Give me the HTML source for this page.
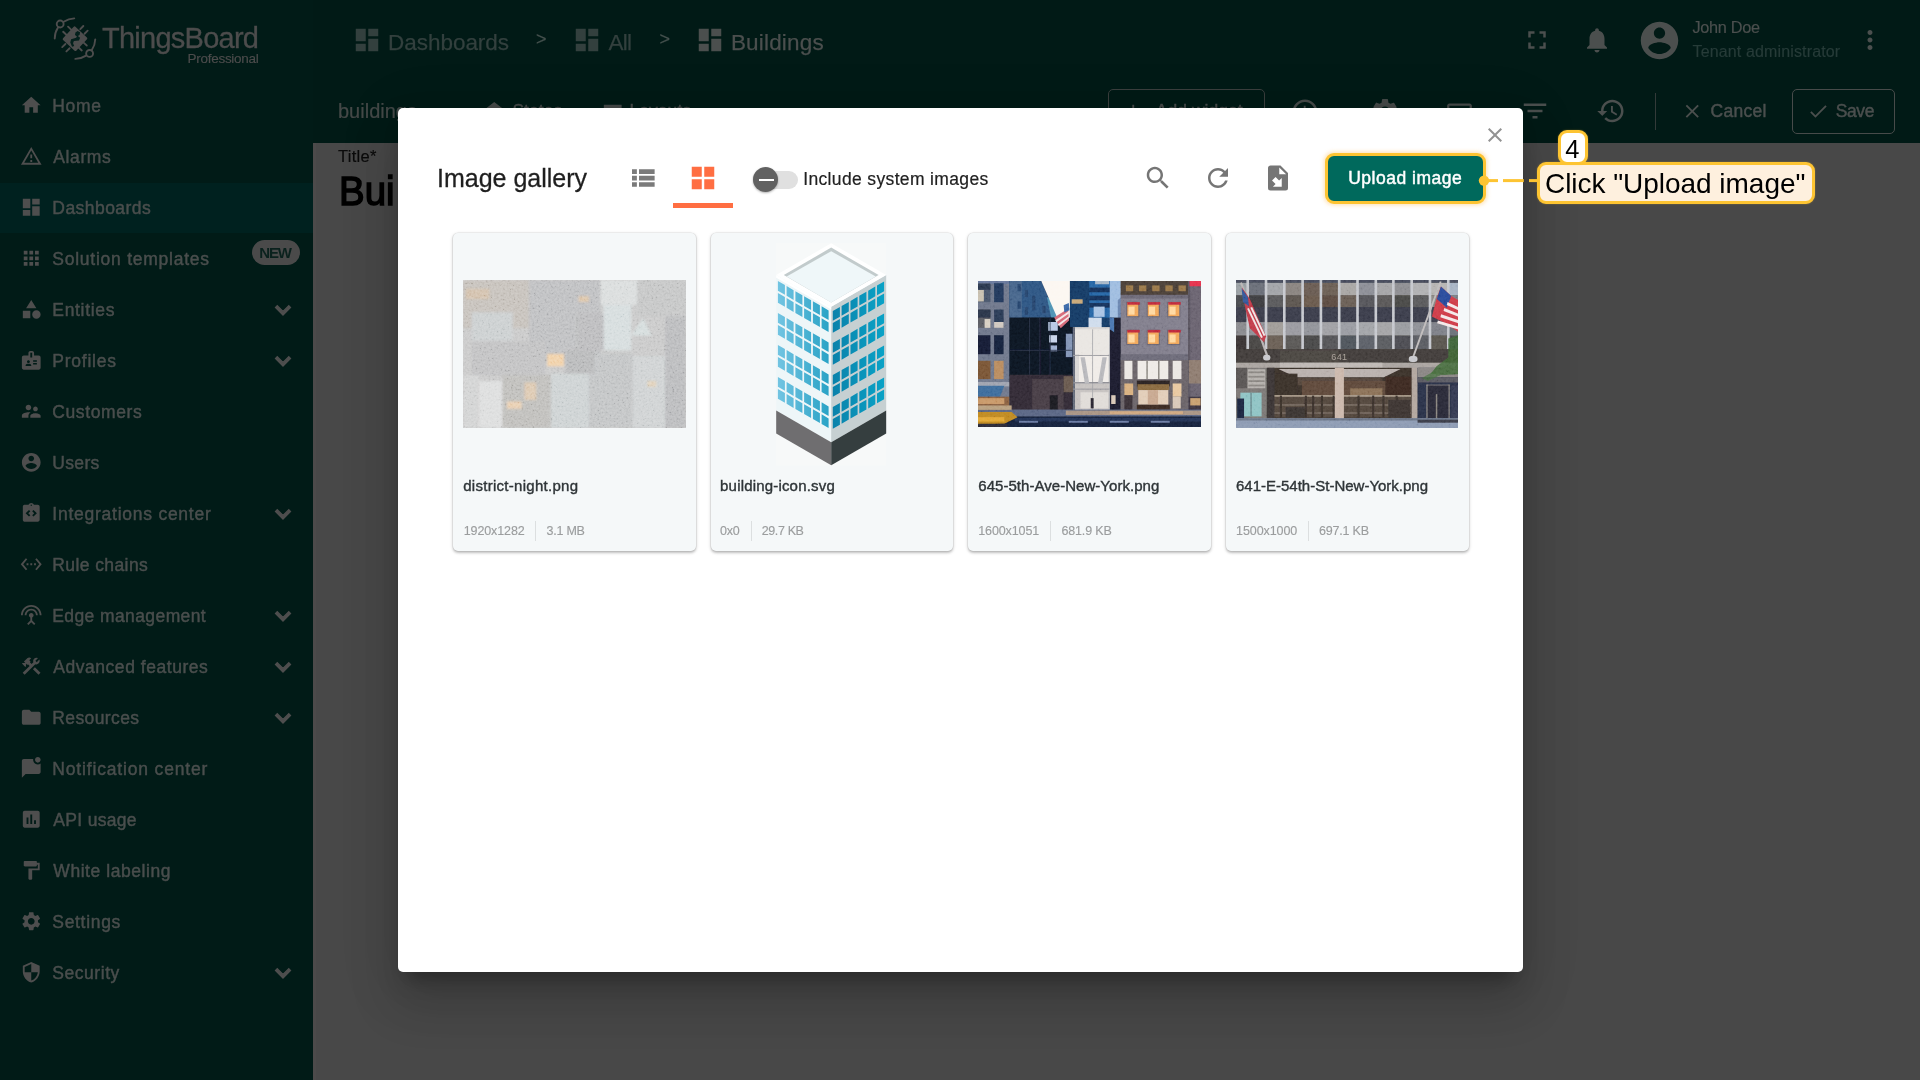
<!DOCTYPE html>
<html lang="en"><head><meta charset="utf-8"><title>ThingsBoard - Image gallery</title>
<style>
html,body{margin:0;padding:0}
body{width:1920px;height:1080px;overflow:hidden;position:relative;background:#484848;font-family:"Liberation Sans",sans-serif}
.a,.t,.i{position:absolute}
.t{line-height:1;white-space:nowrap}
.i{display:block;overflow:visible}
#side{left:0;top:0;width:313px;height:1080px;background:#011b17}
#top{left:313px;top:0;width:1607px;height:80px;background:#011a16}
#dtb{left:313px;top:80px;width:1607px;height:63px;background:#011a16}
#content{left:313px;top:143px;width:1607px;height:937px;background:#484848}
#dlg{left:398px;top:108px;width:1125px;height:864px;background:#fff;border-radius:5px;box-shadow:0 14px 19px -9px rgba(0,0,0,.34),0 30px 48px 4px rgba(0,0,0,.14),0 11px 58px 10px rgba(0,0,0,.07)}
.card{top:233px;width:242.7px;height:318px;background:#f5f8f9;border-radius:5px;box-shadow:0 0 0 .6px rgba(0,0,0,.07),0 1.5px 2.5px rgba(0,0,0,.2),0 1px 4px rgba(0,0,0,.1)}
.vd{width:1px;height:20px;top:521px;background:#dcdfe0}
</style></head><body>

<nav aria-label="Main menu"><div id="side" class="a"></div>
<div class="a" style="left:0;top:183px;width:313px;height:50px;background:#00211f"></div>
<svg class="i" style="left:45px;top:10px;width:60px;height:60px" viewBox="0 0 1080 1080"><g fill="none" stroke="#4d4d4d" stroke-width="34" stroke-linecap="round"><path d="M175 515A365 365 0 0 1 234 316"/><path d="M336 212A365 365 0 0 1 527 150"/><path d="M905 528A365 365 0 0 1 843 719"/><path d="M739 821A365 365 0 0 1 546 880"/><circle cx="273" cy="252" r="62"/><circle cx="803" cy="782" r="62"/><path d="M415 300L475 358"/><path d="M328 392L388 450"/><path d="M690 288L635 345"/><path d="M768 372L712 428"/><path d="M310 668L368 612"/><path d="M385 745L443 688"/><path d="M752 640L695 588"/><path d="M662 728L605 675"/></g><rect x="-163" y="-163" width="326" height="326" rx="22" fill="#4d4d4d" transform="translate(540 517) rotate(43)"/><path fill="#04201c" d="M585 378L632 402 622 452 590 470 632 500 612 548 520 560 505 600 525 650 488 662 455 585 470 525 560 500 575 475 540 452 548 405z"/></svg>
<span class="t" style="left:102.00px;top:24.00px;font-size:29px;color:#4c4c4c;-webkit-text-stroke:0.32px currentColor;letter-spacing:-0.750px;">ThingsBoard</span>
<span class="t" style="left:187.50px;top:52.00px;font-size:13.5px;color:#4c4c4c;-webkit-text-stroke:0.15px currentColor;letter-spacing:-0.273px;">Professional</span>
<svg class="i" style="left:19.65px;top:94.15px;width:22.50px;height:22.50px;" viewBox="0 0 24 24"><path fill="#4e4e4e" d="M10 20v-6h4v6h5v-8h3L12 3 2 12h3v8z"/></svg>
<span class="t" style="left:52.30px;top:98.00px;font-size:17.5px;color:#4a4e4d;font-weight:400;-webkit-text-stroke:0.45px currentColor;letter-spacing:0.684px;">Home</span>
<svg class="i" style="left:19.65px;top:145.15px;width:22.50px;height:22.50px;" viewBox="0 0 24 24"><path fill="#4e4e4e" d="M12 5.99L19.53 19H4.47L12 5.99M12 2L1 21h22L12 2zm1 14h-2v2h2v-2zm0-6h-2v4h2v-4z"/></svg>
<span class="t" style="left:53.30px;top:149.00px;font-size:17.5px;color:#4a4e4d;font-weight:400;-webkit-text-stroke:0.45px currentColor;letter-spacing:0.610px;">Alarms</span>
<svg class="i" style="left:19.65px;top:196.15px;width:22.50px;height:22.50px;" viewBox="0 0 24 24"><path fill="#4e4e4e" d="M3 13h8V3H3v10zm0 8h8v-6H3v6zm10 0h8V11h-8v10zm0-18v6h8V3h-8z"/></svg>
<span class="t" style="left:52.30px;top:200.00px;font-size:17.5px;color:#4a4e4d;font-weight:400;-webkit-text-stroke:0.45px currentColor;letter-spacing:0.450px;">Dashboards</span>
<svg class="i" style="left:19.65px;top:247.15px;width:22.50px;height:22.50px;" viewBox="0 0 24 24"><path fill="#4e4e4e" d="M4 8h4V4H4v4zm6 12h4v-4h-4v4zm-6 0h4v-4H4v4zm0-6h4v-4H4v4zm6 0h4v-4h-4v4zm6-10v4h4V4h-4zm-6 4h4V4h-4v4zm6 6h4v-4h-4v4zm0 6h4v-4h-4v4z"/></svg>
<span class="t" style="left:52.30px;top:251.00px;font-size:17.5px;color:#4a4e4d;font-weight:400;-webkit-text-stroke:0.45px currentColor;letter-spacing:0.753px;">Solution templates</span>
<svg class="i" style="left:19.65px;top:298.15px;width:22.50px;height:22.50px;" viewBox="0 0 24 24"><path fill="#4e4e4e" d="M12 2l-5.5 9h11L12 2zm5.5 11c-2.49 0-4.5 2.01-4.5 4.5s2.01 4.5 4.5 4.5 4.5-2.01 4.5-4.5-2.01-4.5-4.5-4.5zM3 21.5h8v-8H3v8z"/></svg>
<span class="t" style="left:52.30px;top:302.00px;font-size:17.5px;color:#4a4e4d;font-weight:400;-webkit-text-stroke:0.45px currentColor;letter-spacing:0.685px;">Entities</span>
<svg class="i" style="left:267.75px;top:295.40px;width:30.00px;height:30.00px;stroke:#4e4e4e;stroke-width:1px" viewBox="0 0 24 24"><path fill="#4e4e4e" d="M16.59 8.59L12 13.17 7.41 8.59 6 10l6 6 6-6z"/></svg>
<svg class="i" style="left:19.65px;top:349.15px;width:22.50px;height:22.50px;" viewBox="0 0 24 24"><path fill="#4e4e4e" d="M20 7h-5V4c0-1.1-.9-2-2-2h-2c-1.1 0-2 .9-2 2v3H4c-1.1 0-2 .9-2 2v11c0 1.1.9 2 2 2h16c1.1 0 2-.9 2-2V9c0-1.1-.9-2-2-2zM9 12c.83 0 1.5.67 1.5 1.5S9.83 15 9 15s-1.5-.67-1.5-1.5S8.17 12 9 12zm3 6H6v-.75c0-1 2-1.5 3-1.5s3 .5 3 1.5V18zm1-9h-2V4h2v5zm5 7.5h-4V15h4v1.5zm0-3h-4V12h4v1.5z"/></svg>
<span class="t" style="left:52.30px;top:353.00px;font-size:17.5px;color:#4a4e4d;font-weight:400;-webkit-text-stroke:0.45px currentColor;letter-spacing:0.757px;">Profiles</span>
<svg class="i" style="left:267.75px;top:346.40px;width:30.00px;height:30.00px;stroke:#4e4e4e;stroke-width:1px" viewBox="0 0 24 24"><path fill="#4e4e4e" d="M16.59 8.59L12 13.17 7.41 8.59 6 10l6 6 6-6z"/></svg>
<svg class="i" style="left:19.65px;top:400.15px;width:22.50px;height:22.50px;" viewBox="0 0 24 24"><path fill="#4e4e4e" d="M16.5 12c1.38 0 2.49-1.12 2.49-2.5S17.88 7 16.5 7C15.12 7 14 8.12 14 9.5s1.12 2.5 2.5 2.5zM9 11c1.66 0 2.99-1.34 2.99-3S10.66 5 9 5C7.34 5 6 6.34 6 8s1.34 3 3 3zm7.5 3c-1.83 0-5.5.92-5.5 2.75V19h11v-2.25c0-1.83-3.67-2.75-5.5-2.75zM9 13c-2.33 0-7 1.17-7 3.5V19h7v-2.25c0-.85.33-2.34 2.37-3.47C10.5 13.1 9.66 13 9 13z"/></svg>
<span class="t" style="left:52.30px;top:404.00px;font-size:17.5px;color:#4a4e4d;font-weight:400;-webkit-text-stroke:0.45px currentColor;letter-spacing:0.600px;">Customers</span>
<svg class="i" style="left:19.65px;top:451.15px;width:22.50px;height:22.50px;" viewBox="0 0 24 24"><path fill="#4e4e4e" d="M12 2C6.48 2 2 6.48 2 12s4.48 10 10 10 10-4.48 10-10S17.52 2 12 2zm0 3c1.66 0 3 1.34 3 3s-1.34 3-3 3-3-1.34-3-3 1.34-3 3-3zm0 14.2c-2.5 0-4.71-1.28-6-3.22.03-1.99 4-3.08 6-3.08 1.99 0 5.97 1.09 6 3.08-1.29 1.94-3.5 3.22-6 3.22z"/></svg>
<span class="t" style="left:52.30px;top:455.00px;font-size:17.5px;color:#4a4e4d;font-weight:400;-webkit-text-stroke:0.45px currentColor;letter-spacing:0.325px;">Users</span>
<svg class="i" style="left:19.65px;top:502.15px;width:22.50px;height:22.50px;" viewBox="0 0 24 24"><path fill="#4e4e4e" d="M19 3h-4.18C14.4 1.84 13.3 1 12 1s-2.4.84-2.82 2H5c-.14 0-.27.01-.4.04-.39.08-.74.28-1.01.55-.18.18-.33.4-.43.64-.1.23-.16.49-.16.77v14c0 .27.06.54.16.78s.25.45.43.64c.27.27.62.47 1.01.55.13.02.26.03.4.03h14c1.1 0 2-.9 2-2V5c0-1.1-.9-2-2-2zm-8 11.17l-1.41 1.42L6 12l3.59-3.59L11 9.83 8.83 12 11 14.17zm1-9.92c-.41 0-.75-.34-.75-.75s.34-.75.75-.75.75.34.75.75-.34.75-.75.75zm2.41 11.34L13 14.17 15.17 12 13 9.83l1.41-1.42L18 12l-3.59 3.59z"/></svg>
<span class="t" style="left:52.30px;top:506.00px;font-size:17.5px;color:#4a4e4d;font-weight:400;-webkit-text-stroke:0.45px currentColor;letter-spacing:0.752px;">Integrations center</span>
<svg class="i" style="left:267.75px;top:499.40px;width:30.00px;height:30.00px;stroke:#4e4e4e;stroke-width:1px" viewBox="0 0 24 24"><path fill="#4e4e4e" d="M16.59 8.59L12 13.17 7.41 8.59 6 10l6 6 6-6z"/></svg>
<svg class="i" style="left:19.65px;top:553.15px;width:22.50px;height:22.50px;" viewBox="0 0 24 24"><path fill="#4e4e4e" d="M7.77 6.76L6.23 5.48.82 12l5.41 6.52 1.54-1.28L3.42 12l4.35-5.24zM7 13h2v-2H7v2zm10-2h-2v2h2v-2zm-6 2h2v-2h-2v2zm6.77-7.52l-1.54 1.28L20.58 12l-4.35 5.24 1.54 1.28L23.18 12l-5.41-6.52z"/></svg>
<span class="t" style="left:52.30px;top:557.00px;font-size:17.5px;color:#4a4e4d;font-weight:400;-webkit-text-stroke:0.45px currentColor;letter-spacing:0.405px;">Rule chains</span>
<svg class="i" style="left:19.65px;top:604.15px;width:22.50px;height:22.50px;" viewBox="0 0 24 24"><path fill="#4e4e4e" d="M12 5c-3.87 0-7 3.13-7 7h2c0-2.76 2.24-5 5-5s5 2.24 5 5h2c0-3.87-3.13-7-7-7zm1 9.29c.88-.39 1.5-1.26 1.5-2.29 0-1.38-1.12-2.5-2.5-2.5S9.500 10.62 9.500 12c0 1.020.62 1.900 1.500 2.290v3.300L7.590 21 9 22.410l3-3 3 3L16.410 21 13 17.590v-3.300zM12 1C5.930 1 1 5.930 1 12h2c0-4.970 4.030-9 9-9s9 4.030 9 9h2c0-6.070-4.930-11-11-11z"/></svg>
<span class="t" style="left:52.30px;top:608.00px;font-size:17.5px;color:#4a4e4d;font-weight:400;-webkit-text-stroke:0.45px currentColor;letter-spacing:0.396px;">Edge management</span>
<svg class="i" style="left:267.75px;top:601.40px;width:30.00px;height:30.00px;stroke:#4e4e4e;stroke-width:1px" viewBox="0 0 24 24"><path fill="#4e4e4e" d="M16.59 8.59L12 13.17 7.41 8.59 6 10l6 6 6-6z"/></svg>
<svg class="i" style="left:19.65px;top:655.15px;width:22.50px;height:22.50px;" viewBox="0 0 24 24"><path fill="#4e4e4e" d="M13.783 15.172l2.121-2.121 5.996 5.996-2.121 2.121zM17.5 10c1.93 0 3.5-1.57 3.5-3.5 0-.58-.16-1.12-.41-1.6l-2.7 2.7-1.49-1.49 2.7-2.7c-.48-.25-1.02-.41-1.6-.41C15.57 3 14 4.57 14 6.500c0 .41.08.8.21 1.160l-1.850 1.850-1.780-1.780.71-.71-1.410-1.410L12 3.490c-1.170-1.170-3.070-1.170-4.240 0L4.220 7.030l1.410 1.410H2.810l-.71.71 3.540 3.540.71-.71V9.150l1.410 1.410.71-.71 1.780 1.780-7.410 7.410 2.120 2.120L16.340 9.790c.36.13.75.21 1.160.21z"/></svg>
<span class="t" style="left:53.30px;top:659.00px;font-size:17.5px;color:#4a4e4d;font-weight:400;-webkit-text-stroke:0.45px currentColor;letter-spacing:0.534px;">Advanced features</span>
<svg class="i" style="left:267.75px;top:652.40px;width:30.00px;height:30.00px;stroke:#4e4e4e;stroke-width:1px" viewBox="0 0 24 24"><path fill="#4e4e4e" d="M16.59 8.59L12 13.17 7.41 8.59 6 10l6 6 6-6z"/></svg>
<svg class="i" style="left:19.65px;top:706.15px;width:22.50px;height:22.50px;" viewBox="0 0 24 24"><path fill="#4e4e4e" d="M10 4H4c-1.1 0-1.99.9-1.99 2L2 18c0 1.1.9 2 2 2h16c1.1 0 2-.9 2-2V8c0-1.1-.9-2-2-2h-8l-2-2z"/></svg>
<span class="t" style="left:52.30px;top:710.00px;font-size:17.5px;color:#4a4e4d;font-weight:400;-webkit-text-stroke:0.45px currentColor;letter-spacing:0.381px;">Resources</span>
<svg class="i" style="left:267.75px;top:703.40px;width:30.00px;height:30.00px;stroke:#4e4e4e;stroke-width:1px" viewBox="0 0 24 24"><path fill="#4e4e4e" d="M16.59 8.59L12 13.17 7.41 8.59 6 10l6 6 6-6z"/></svg>
<svg class="i" style="left:19.65px;top:757.15px;width:22.50px;height:22.50px;" viewBox="0 0 24 24"><path fill="#4e4e4e" d="M22 6.98V16c0 1.1-.9 2-2 2H6l-4 4V4c0-1.1.9-2 2-2h10.1c-.06.32-.1.66-.1 1 0 2.76 2.24 5 5 5 1.13 0 2.16-.39 3-1.02zM16 3c0 1.66 1.34 3 3 3s3-1.34 3-3-1.34-3-3-3-3 1.34-3 3z"/></svg>
<span class="t" style="left:52.30px;top:761.00px;font-size:17.5px;color:#4a4e4d;font-weight:400;-webkit-text-stroke:0.45px currentColor;letter-spacing:0.836px;">Notification center</span>
<svg class="i" style="left:19.65px;top:808.15px;width:22.50px;height:22.50px;" viewBox="0 0 24 24"><path fill="#4e4e4e" d="M19 3H5c-1.1 0-2 .9-2 2v14c0 1.1.9 2 2 2h14c1.1 0 2-.9 2-2V5c0-1.1-.9-2-2-2zM9 17H7v-7h2v7zm4 0h-2V7h2v10zm4 0h-2v-4h2v4z"/></svg>
<span class="t" style="left:53.30px;top:812.00px;font-size:17.5px;color:#4a4e4d;font-weight:400;-webkit-text-stroke:0.45px currentColor;letter-spacing:0.319px;">API usage</span>
<svg class="i" style="left:19.65px;top:859.15px;width:22.50px;height:22.50px;" viewBox="0 0 24 24"><path fill="#4e4e4e" d="M18 4V3c0-.55-.45-1-1-1H5c-.55 0-1 .45-1 1v4c0 .55.45 1 1 1h12c.55 0 1-.45 1-1V6h1v4H9v11c0 .55.45 1 1 1h2c.55 0 1-.45 1-1v-9h8V4h-3z"/></svg>
<span class="t" style="left:53.30px;top:863.00px;font-size:17.5px;color:#4a4e4d;font-weight:400;-webkit-text-stroke:0.45px currentColor;letter-spacing:0.562px;">White labeling</span>
<svg class="i" style="left:19.65px;top:910.15px;width:22.50px;height:22.50px;" viewBox="0 0 24 24"><path fill="#4e4e4e" d="M19.14 12.94c.04-.3.06-.61.06-.94 0-.32-.02-.64-.07-.94l2.03-1.58c.18-.14.23-.41.12-.61l-1.92-3.32c-.12-.22-.37-.29-.59-.22l-2.39.96c-.5-.38-1.03-.7-1.62-.94l-.36-2.54c-.04-.24-.24-.41-.48-.41h-3.84c-.24 0-.43.17-.47.41l-.36 2.54c-.59.24-1.13.57-1.62.94l-2.39-.96c-.22-.08-.47 0-.59.22L2.74 8.87c-.12.21-.08.47.12.61l2.03 1.58c-.05.3-.09.63-.09.94s.02.64.07.94l-2.03 1.58c-.18.14-.23.41-.12.61l1.92 3.32c.12.22.37.29.59.22l2.39-.96c.5.38 1.03.7 1.62.94l.36 2.54c.05.24.24.41.48.41h3.84c.24 0 .44-.17.47-.41l.36-2.54c.59-.24 1.13-.56 1.62-.94l2.39.96c.22.08.47 0 .59-.22l1.92-3.32c.12-.22.07-.47-.12-.61l-2.01-1.58zM12 15.6c-1.98 0-3.6-1.62-3.6-3.6s1.62-3.6 3.6-3.6 3.6 1.62 3.6 3.6-1.62 3.6-3.6 3.6z"/></svg>
<span class="t" style="left:52.30px;top:914.00px;font-size:17.5px;color:#4a4e4d;font-weight:400;-webkit-text-stroke:0.45px currentColor;letter-spacing:0.685px;">Settings</span>
<svg class="i" style="left:19.65px;top:961.15px;width:22.50px;height:22.50px;" viewBox="0 0 24 24"><path fill="#4e4e4e" d="M12 1L3 5v6c0 5.55 3.84 10.74 9 12 5.16-1.26 9-6.45 9-12V5l-9-4zm0 10.99h7c-.53 4.12-3.28 7.79-7 8.94V12H5V6.3l7-3.11v8.8z"/></svg>
<span class="t" style="left:52.30px;top:965.00px;font-size:17.5px;color:#4a4e4d;font-weight:400;-webkit-text-stroke:0.45px currentColor;letter-spacing:0.543px;">Security</span>
<svg class="i" style="left:267.75px;top:958.40px;width:30.00px;height:30.00px;stroke:#4e4e4e;stroke-width:1px" viewBox="0 0 24 24"><path fill="#4e4e4e" d="M16.59 8.59L12 13.17 7.41 8.59 6 10l6 6 6-6z"/></svg>
<div class="a" style="left:251.75px;top:239.5px;width:48.25px;height:25px;border-radius:12.5px;background:#4a4a4a"></div>
<span class="t" style="left:259.25px;top:245.00px;font-size:15px;color:#0a211d;font-weight:700;letter-spacing:-1.125px;">NEW</span>
</nav>
<header><div id="top" class="a"></div>
<svg class="i" style="left:352.10px;top:25.00px;width:30.00px;height:30.00px;" viewBox="0 0 24 24"><path fill="#33403e" d="M3 13h8V3H3v10zm0 8h8v-6H3v6zm10 0h8V11h-8v10zm0-18v6h8V3h-8z"/></svg>
<span class="t" style="left:388.00px;top:32.00px;font-size:22.5px;color:#33403e;-webkit-text-stroke:0.25px currentColor;letter-spacing:-0.028px;">Dashboards</span>
<span class="t" style="left:536.00px;top:30.00px;font-size:18px;color:#46524f;-webkit-text-stroke:0.20px currentColor;">&gt;</span>
<svg class="i" style="left:571.70px;top:25.00px;width:30.00px;height:30.00px;" viewBox="0 0 24 24"><path fill="#33403e" d="M3 13h8V3H3v10zm0 8h8v-6H3v6zm10 0h8V11h-8v10zm0-18v6h8V3h-8z"/></svg>
<span class="t" style="left:608.40px;top:32.00px;font-size:22.5px;color:#33403e;-webkit-text-stroke:0.25px currentColor;letter-spacing:-0.750px;">All</span>
<span class="t" style="left:659.40px;top:30.00px;font-size:18px;color:#46524f;-webkit-text-stroke:0.20px currentColor;">&gt;</span>
<svg class="i" style="left:695.40px;top:25.00px;width:30.00px;height:30.00px;" viewBox="0 0 24 24"><path fill="#4b4f4e" d="M3 13h8V3H3v10zm0 8h8v-6H3v6zm10 0h8V11h-8v10zm0-18v6h8V3h-8z"/></svg>
<span class="t" style="left:730.90px;top:32.00px;font-size:22.5px;color:#4b4f4e;-webkit-text-stroke:0.25px currentColor;letter-spacing:0.188px;">Buildings</span>
<svg class="i" style="left:1522.40px;top:25.00px;width:30.00px;height:30.00px;" viewBox="0 0 24 24"><path fill="#4b4f4e" d="M7 14H5v5h5v-2H7v-3zm-2-4h2V7h3V5H5v5zm12 7h-3v2h5v-5h-2v3zM14 5v2h3v3h2V5h-5z"/></svg>
<svg class="i" style="left:1582.40px;top:25.20px;width:30.00px;height:30.00px;" viewBox="0 0 24 24"><path fill="#4b4f4e" d="M12 22c1.1 0 2-.9 2-2h-4c0 1.1.89 2 2 2zm6-6v-5c0-3.07-1.64-5.64-4.5-6.32V4c0-.83-.67-1.5-1.5-1.5s-1.5.67-1.5 1.5v.68C7.63 5.36 6 7.92 6 11v5l-2 2v1h16v-1l-2-2z"/></svg>
<svg class="i" style="left:1637.40px;top:18.00px;width:45.00px;height:45.00px;" viewBox="0 0 24 24"><path fill="#4b4f4e" d="M12 2C6.48 2 2 6.48 2 12s4.48 10 10 10 10-4.48 10-10S17.52 2 12 2zm0 3c1.66 0 3 1.34 3 3s-1.34 3-3 3-3-1.34-3-3 1.34-3 3-3zm0 14.2c-2.5 0-4.71-1.28-6-3.22.03-1.99 4-3.08 6-3.08 1.99 0 5.97 1.09 6 3.08-1.29 1.94-3.5 3.22-6 3.22z"/></svg>
<span class="t" style="left:1692.50px;top:19.00px;font-size:16.3px;color:#4b4f4e;-webkit-text-stroke:0.18px currentColor;letter-spacing:-0.314px;">John Doe</span>
<span class="t" style="left:1692.50px;top:44.00px;font-size:16px;color:#263b38;-webkit-text-stroke:0.18px currentColor;letter-spacing:0.142px;">Tenant administrator</span>
<svg class="i" style="left:1855.20px;top:25.20px;width:30.00px;height:30.00px;" viewBox="0 0 24 24"><path fill="#4b4f4e" d="M12 8c1.1 0 2-.9 2-2s-.9-2-2-2-2 .9-2 2 .9 2 2 2zm0 2c-1.1 0-2 .9-2 2s.9 2 2 2 2-.9 2-2-.9-2-2-2zm0 6c-1.1 0-2 .9-2 2s.9 2 2 2 2-.9 2-2-.9-2-2-2z"/></svg>
</header>
<main><div id="dtb" class="a"></div><div id="content" class="a"></div>
<div class="a" style="left:313px;top:143px;width:3px;height:937px;background:#4c4a4a"></div>
<span class="t" style="left:338.00px;top:101.00px;font-size:20px;color:#454948;-webkit-text-stroke:0.22px currentColor;">buildings</span>
<svg class="i" style="left:482.55px;top:99.75px;width:22.50px;height:22.50px;" viewBox="0 0 24 24"><path fill="#454948" d="M11.99 18.54l-7.37-5.73L3 14.07l9 7 9-7-1.63-1.27-7.38 5.74zM12 16l7.36-5.73L21 9l-9-7-9 7 1.63 1.27L12 16z"/></svg>
<span class="t" style="left:512.40px;top:103.00px;font-size:17.5px;color:#454948;font-weight:400;-webkit-text-stroke:0.45px currentColor;letter-spacing:0.060px;">States</span>
<svg class="i" style="left:600.75px;top:99.75px;width:22.50px;height:22.50px;" viewBox="0 0 24 24"><path fill="#454948" d="M3 19h6v-7H3v7zm7 0h12v-7H10v7zM3 5v6h19V5H3z"/></svg>
<span class="t" style="left:629.40px;top:103.00px;font-size:17.5px;color:#454948;font-weight:400;-webkit-text-stroke:0.45px currentColor;letter-spacing:0.067px;">Layouts</span>
<div class="a" style="left:1108px;top:89px;width:157px;height:45px;box-sizing:border-box;border:1px solid #3a3e3d;border-radius:5px"></div>
<svg class="i" style="left:1122.25px;top:99.75px;width:22.50px;height:22.50px;" viewBox="0 0 24 24"><path fill="#454948" d="M19 13h-6v6h-2v-6H5v-2h6V5h2v6h6v2z"/></svg>
<span class="t" style="left:1155.80px;top:103.00px;font-size:17.5px;color:#454948;font-weight:400;-webkit-text-stroke:0.45px currentColor;letter-spacing:0.022px;">Add widget</span>
<svg class="i" style="left:1289.70px;top:97.00px;width:30.00px;height:30.00px;" viewBox="0 0 24 24"><path fill="#454948" d="M11.99 2C6.47 2 2 6.48 2 12s4.47 10 9.99 10C17.52 22 22 17.52 22 12S17.52 2 11.99 2zM12 20c-4.42 0-8-3.58-8-8s3.58-8 8-8 8 3.58 8 8-3.58 8-8 8zm.5-13H11v6l5.250 3.150.75-1.230-4.500-2.670z"/></svg>
<svg class="i" style="left:1369.90px;top:96.00px;width:30.00px;height:30.00px;" viewBox="0 0 24 24"><path fill="#454948" d="M19.14 12.94c.04-.3.06-.61.06-.94 0-.32-.02-.64-.07-.94l2.03-1.58c.18-.14.23-.41.12-.61l-1.92-3.32c-.12-.22-.37-.29-.59-.22l-2.39.96c-.5-.38-1.03-.7-1.62-.94l-.36-2.54c-.04-.24-.24-.41-.48-.41h-3.84c-.24 0-.43.17-.47.41l-.36 2.54c-.59.24-1.13.57-1.62.94l-2.39-.96c-.22-.08-.47 0-.59.22L2.74 8.87c-.12.21-.08.47.12.61l2.03 1.58c-.05.3-.09.63-.09.94s.02.64.07.94l-2.03 1.58c-.18.14-.23.41-.12.61l1.92 3.32c.12.22.37.29.59.22l2.39-.96c.5.38 1.03.7 1.62.94l.36 2.54c.05.24.24.41.48.41h3.84c.24 0 .44-.17.47-.41l.36-2.54c.59-.24 1.13-.56 1.62-.94l2.39.96c.22.08.47 0 .59-.22l1.92-3.32c.12-.22.07-.47-.12-.61l-2.01-1.58zM12 15.6c-1.98 0-3.6-1.62-3.6-3.6s1.62-3.6 3.6-3.6 3.6 1.62 3.6 3.6-1.62 3.6-3.6 3.6z"/></svg>
<svg class="i" style="left:1445.50px;top:99.50px;width:27.00px;height:27.00px;" viewBox="0 0 24 24"><path fill="#454948" d="M21 3H3c-1.1 0-2 .9-2 2v12c0 1.1.9 2 2 2h5v2h8v-2h5c1.1 0 1.990-.9 1.990-2L23 5c0-1.100-.9-2-2-2zm0 14H3V5h18v12z"/></svg>
<svg class="i" style="left:1520.00px;top:95.80px;width:30.00px;height:30.00px;" viewBox="0 0 24 24"><path fill="#4b4f4e" d="M10 18h4v-2h-4v2zM3 6v2h18V6H3zm3 7h12v-2H6v2z"/></svg>
<svg class="i" style="left:1595.70px;top:95.80px;width:30.00px;height:30.00px;" viewBox="0 0 24 24"><path fill="#4b4f4e" d="M13 3c-4.97 0-9 4.03-9 9H1l3.89 3.89.07.14L9 12H6c0-3.87 3.13-7 7-7s7 3.13 7 7-3.13 7-7 7c-1.93 0-3.68-.79-4.94-2.06l-1.42 1.42C8.27 19.99 10.51 21 13 21c4.97 0 9-4.03 9-9s-4.03-9-9-9zm-1 5v5l4.28 2.54.72-1.21-3.5-2.08V8H12z"/></svg>
<div class="a" style="left:1655px;top:93px;width:1px;height:37px;background:#333a39"></div>
<svg class="i" style="left:1681.05px;top:99.65px;width:22.50px;height:22.50px;" viewBox="0 0 24 24"><path fill="#4b4f4e" d="M19 6.41L17.59 5 12 10.59 6.41 5 5 6.41 10.59 12 5 17.59 6.41 19 12 13.41 17.59 19 19 17.59 13.41 12z"/></svg>
<span class="t" style="left:1710.50px;top:103.00px;font-size:17.5px;color:#4b4f4e;font-weight:400;-webkit-text-stroke:0.45px currentColor;letter-spacing:0.260px;">Cancel</span>
<div class="a" style="left:1792px;top:89px;width:103px;height:45px;box-sizing:border-box;border:1px solid #474b4a;border-radius:5px"></div>
<svg class="i" style="left:1806.95px;top:99.65px;width:22.50px;height:22.50px;" viewBox="0 0 24 24"><path fill="#4b4f4e" d="M9 16.17L4.83 12l-1.42 1.41L9 19 21 7l-1.41-1.41z"/></svg>
<span class="t" style="left:1835.80px;top:103.00px;font-size:17.5px;color:#4b4f4e;font-weight:400;-webkit-text-stroke:0.45px currentColor;letter-spacing:-0.433px;">Save</span>
<span class="t" style="left:338.10px;top:148.00px;font-size:16.5px;color:#0b0b0b;-webkit-text-stroke:0.18px currentColor;letter-spacing:0.260px;">Title*</span>
<span class="t" style="left:338.85px;top:170.00px;font-size:41.5px;color:#000;font-weight:400;-webkit-text-stroke:1.49px currentColor;transform:scaleX(0.9263);transform-origin:0 0;clip-path:inset(0 calc(100% - 61.3px) 0 0);">Buildings</span>
</main>
<section role="dialog" aria-label="Image gallery"><div id="dlg" class="a"></div>
<svg class="i" style="left:1483.20px;top:122.90px;width:24.00px;height:24.00px;" viewBox="0 0 24 24"><path fill="#929292" d="M19 6.41L17.59 5 12 10.59 6.41 5 5 6.41 10.59 12 5 17.59 6.41 19 12 13.41 17.59 19 19 17.59 13.41 12z"/></svg>
<span class="t" style="left:437.00px;top:166.00px;font-size:25px;color:#1f1f1f;-webkit-text-stroke:0.27px currentColor;">Image gallery</span>
<svg class="i" style="left:628.40px;top:163.00px;width:30.00px;height:30.00px;" viewBox="0 0 24 24"><path fill="#7a7a7a" d="M3.2 5h3.9v3.7H3.2zM3.2 10.2h3.9v3.7H3.2zM3.2 15.3h3.9V19H3.2zM8.8 5h12.5v3.7H8.8zM8.8 10.2h12.5v3.7H8.8zM8.8 15.3h12.5V19H8.8z"/></svg>
<svg class="i" style="left:688.00px;top:163.00px;width:30.00px;height:30.00px;" viewBox="0 0 24 24"><path fill="#ff6e42" d="M3 3h8v8H3zM3 13h8v8H3zM13 3h8v8h-8zM13 13h8v8h-8z"/></svg>
<div class="a" style="left:673px;top:203px;width:60px;height:4.5px;background:#ff6e42"></div>
<div class="a" style="left:753px;top:171.2px;width:45px;height:17.6px;border-radius:9px;background:#e0e0e0"></div>
<div class="a" style="left:753.1px;top:167.2px;width:25.2px;height:25.2px;border-radius:50%;background:#616161;box-shadow:0 1px 2px rgba(0,0,0,.22),0 1px 3px rgba(0,0,0,.1)"></div>
<div class="a" style="left:758.6px;top:178.6px;width:15.4px;height:2.4px;background:#fff"></div>
<span class="t" style="left:803.20px;top:171.00px;font-size:17.5px;color:#212121;-webkit-text-stroke:0.19px currentColor;letter-spacing:0.355px;">Include system images</span>
<svg class="i" style="left:1143.00px;top:162.60px;width:30.00px;height:30.00px;" viewBox="0 0 24 24"><path fill="#757575" d="M15.5 14h-.79l-.28-.27C15.41 12.59 16 11.11 16 9.5 16 5.91 13.09 3 9.5 3S3 5.91 3 9.5 5.91 16 9.5 16c1.61 0 3.09-.59 4.23-1.57l.27.28v.79l5 4.99L20.49 19l-4.99-5zm-6 0C7.01 14 5 11.99 5 9.5S7.01 5 9.5 5 14 7.01 14 9.5 11.99 14 9.5 14z"/></svg>
<svg class="i" style="left:1203.00px;top:163.00px;width:30.00px;height:30.00px;" viewBox="0 0 24 24"><path fill="#757575" d="M17.65 6.35C16.2 4.9 14.21 4 12 4c-4.42 0-7.99 3.58-7.99 8s3.57 8 7.99 8c3.73 0 6.84-2.55 7.73-6h-2.08c-.82 2.33-3.04 4-5.65 4-3.31 0-6-2.69-6-6s2.69-6 6-6c1.66 0 3.14.69 4.22 1.78L13 11h7V4l-2.35 2.35z"/></svg>
<svg class="i" style="left:1263.00px;top:163.00px;width:30.00px;height:30.00px;" viewBox="0 0 24 24"><path fill="#757575" d="M6 2C4.89 2 4 2.9 4 4v16a2 2 0 0 0 2 2h12a2 2 0 0 0 2-2V8l-6-6H6zm7 1.5L18.5 9H13V3.5zM10.05 11.22l2.83 2.83L15 11.93V19H7.930l2.120-2.120-2.830-2.830 2.830-2.830z"/></svg>
<div class="a" style="left:1324.9px;top:153.2px;width:160.9px;height:50.5px;box-sizing:border-box;border:3px solid #fdc432;border-radius:9px;background:#00695c;box-shadow:0 0 4px .5px rgba(253,214,150,.75)"></div>
<span class="t" style="left:1348.20px;top:170.00px;font-size:17.5px;color:#ffffff;font-weight:400;-webkit-text-stroke:0.45px currentColor;letter-spacing:0.500px;">Upload image</span>
<div class="a card" style="left:453.0px"></div>
<div class="a card" style="left:710.7px"></div>
<div class="a card" style="left:968.4px"></div>
<div class="a card" style="left:1226.1px"></div>
<svg class="i" style="left:463.1px;top:280.1px;width:222.8px;height:147.8px;overflow:hidden" viewBox="0 0 1522 1010" preserveAspectRatio="none"><defs><filter id="b1" x="-5%" y="-5%" width="110%" height="110%"><feGaussianBlur stdDeviation="8"/></filter><filter id="nb1" x="0" y="0" width="100%" height="100%"><feTurbulence type="fractalNoise" baseFrequency="0.07" numOctaves="3" seed="5"/><feColorMatrix type="matrix" values="1.6 0 0 0 -.3 1.6 0 0 0 -.3 1.6 0 0 0 -.3 0 0 0 0 1"/></filter></defs><g filter="url(#b1)"><rect x="-40" y="-40" width="1602" height="1090" fill="#c8c8c8"/><rect x="0" y="0" width="450" height="330" fill="#c5c0ba"/><rect x="450" y="0" width="490" height="560" fill="#bdbec0"/><rect x="940" y="0" width="250" height="170" fill="#d9dcdc"/><rect x="960" y="170" width="190" height="310" fill="#d5dcdd"/><rect x="1190" y="0" width="332" height="250" fill="#c4c5c5"/><rect x="1380" y="250" width="142" height="760" fill="#b9babc"/><rect x="60" y="220" width="280" height="200" fill="#cacecf"/><rect x="60" y="420" width="500" height="230" fill="#c0c0c1"/><rect x="0" y="650" width="110" height="360" fill="#d1d2d2"/><rect x="110" y="690" width="160" height="320" fill="#dcdddd"/><rect x="270" y="650" width="330" height="360" fill="#bebdba"/><rect x="600" y="640" width="260" height="370" fill="#ccd1d2"/><rect x="860" y="500" width="300" height="510" fill="#c1c3c4"/><rect x="1160" y="520" width="220" height="490" fill="#ced1d2"/><polygon points="1150,380 1230,260 1290,380" fill="#d4dcdc"/><rect x="700" y="480" width="200" height="160" fill="#b7b8b9"/><rect x="780" y="230" width="180" height="250" fill="#bababc"/><rect x="575" y="505" width="115" height="85" fill="#f0d0a8"/><rect x="300" y="830" width="100" height="50" fill="#e8ceb0"/><rect x="420" y="700" width="80" height="120" fill="#dcc8b0"/><rect x="20" y="60" width="160" height="70" fill="#d2c0ac"/><rect x="790" y="110" width="70" height="40" fill="#dcc4a8"/><rect x="1260" y="690" width="60" height="40" fill="#e0d0ba"/></g><rect width="1522" height="1010" filter="url(#nb1)" opacity="0.45" style="mix-blend-mode:soft-light"/></svg>
<svg class="i" style="left:771px;top:240px;width:120px;height:230px" viewBox="0 0 120 230">
<defs><linearGradient id="wl" x1="0" x2="1" y1="0" y2="0"><stop offset="0" stop-color="#72c4e2"/><stop offset="1" stop-color="#2aa3c6"/></linearGradient><linearGradient id="wr" x1="0" x2="1" y1="0" y2="0"><stop offset="0" stop-color="#0a82ab"/><stop offset="1" stop-color="#0aa2c6"/></linearGradient></defs>
<rect x="5" y="3" width="110" height="222.5" fill="#f7f9f9"/>
<polygon points="5.2,35.0 60.2,66.7 60.2,202.2 5.2,170.5" fill="#eef6f8"/>
<polygon points="60.2,66.7 115.2,35.0 115.2,170.5 60.2,202.2" fill="#c6d0d2"/>
<polygon points="5.2,170.5 60.2,202.2 60.2,225.2 5.2,193.5" fill="#6f6e70"/>
<polygon points="60.2,202.2 115.2,170.5 115.2,193.5 60.2,225.2" fill="#353e3f"/>
<polygon points="60.2,3.2 115.2,35.0 60.2,66.7 5.2,35.0" fill="#ffffff"/>
<polygon points="60.2,7.6 107.6,35.0 60.2,62.4 12.8,35.0" fill="#c2cbcc"/>
<polygon points="60.2,11.2 104.7,36.4 60.2,62.4 15.7,36.4" fill="#eff7f9"/>
<polygon points="5.2,35.0 60.2,66.7 60.2,69.5 5.2,37.8" fill="#ffffff"/>
<path fill="url(#wl)" d="M6.9 41.1L13.9 45.1L13.9 54.8L6.9 50.8zM15.6 46.1L22.6 50.2L22.6 59.9L15.6 55.8zM24.4 51.2L31.4 55.2L31.4 64.9L24.4 60.9zM33.1 56.2L40.1 60.3L40.1 70.0L33.1 65.9zM41.9 61.3L48.9 65.3L48.9 75.0L41.9 71.0zM50.6 66.3L57.6 70.4L57.6 80.1L50.6 76.0zM6.9 53.1L13.9 57.1L13.9 66.8L6.9 62.8zM15.6 58.1L22.6 62.2L22.6 71.9L15.6 67.8zM24.4 63.2L31.4 67.2L31.4 76.9L24.4 72.9zM33.1 68.2L40.1 72.3L40.1 82.0L33.1 77.9zM41.9 73.3L48.9 77.3L48.9 87.0L41.9 83.0zM50.6 78.3L57.6 82.4L57.6 92.1L50.6 88.0zM6.9 73.1L13.9 77.1L13.9 86.8L6.9 82.8zM15.6 78.1L22.6 82.2L22.6 91.9L15.6 87.8zM24.4 83.2L31.4 87.2L31.4 96.9L24.4 92.9zM33.1 88.2L40.1 92.3L40.1 102.0L33.1 97.9zM41.9 93.3L48.9 97.3L48.9 107.0L41.9 103.0zM50.6 98.3L57.6 102.4L57.6 112.1L50.6 108.0zM6.9 85.1L13.9 89.1L13.9 98.8L6.9 94.8zM15.6 90.1L22.6 94.2L22.6 103.9L15.6 99.8zM24.4 95.2L31.4 99.2L31.4 108.9L24.4 104.9zM33.1 100.2L40.1 104.3L40.1 114.0L33.1 109.9zM41.9 105.3L48.9 109.3L48.9 119.0L41.9 115.0zM50.6 110.3L57.6 114.4L57.6 124.1L50.6 120.0zM6.9 105.1L13.9 109.1L13.9 118.8L6.9 114.8zM15.6 110.1L22.6 114.2L22.6 123.9L15.6 119.8zM24.4 115.2L31.4 119.2L31.4 128.9L24.4 124.9zM33.1 120.2L40.1 124.3L40.1 134.0L33.1 129.9zM41.9 125.3L48.9 129.3L48.9 139.0L41.9 135.0zM50.6 130.3L57.6 134.4L57.6 144.1L50.6 140.0zM6.9 117.1L13.9 121.1L13.9 130.8L6.9 126.8zM15.6 122.1L22.6 126.2L22.6 135.9L15.6 131.8zM24.4 127.2L31.4 131.2L31.4 140.9L24.4 136.9zM33.1 132.2L40.1 136.3L40.1 146.0L33.1 141.9zM41.9 137.3L48.9 141.3L48.9 151.0L41.9 147.0zM50.6 142.3L57.6 146.4L57.6 156.1L50.6 152.0zM6.9 137.1L13.9 141.1L13.9 150.8L6.9 146.8zM15.6 142.1L22.6 146.2L22.6 155.9L15.6 151.8zM24.4 147.2L31.4 151.2L31.4 160.9L24.4 156.9zM33.1 152.2L40.1 156.3L40.1 166.0L33.1 161.9zM41.9 157.3L48.9 161.3L48.9 171.0L41.9 167.0zM50.6 162.3L57.6 166.4L57.6 176.1L50.6 172.0zM6.9 149.1L13.9 153.1L13.9 162.8L6.9 158.8zM15.6 154.1L22.6 158.2L22.6 167.9L15.6 163.8zM24.4 159.2L31.4 163.2L31.4 172.9L24.4 168.9zM33.1 164.2L40.1 168.3L40.1 178.0L33.1 173.9zM41.9 169.3L48.9 173.3L48.9 183.0L41.9 179.0zM50.6 174.3L57.6 178.4L57.6 188.1L50.6 184.0z"/>
<path fill="url(#wr)" d="M61.8 71.1L68.9 67.0L68.9 76.7L61.8 80.8zM70.6 66.0L77.8 61.9L77.8 71.6L70.6 75.7zM79.5 60.9L86.6 56.8L86.6 66.5L79.5 70.6zM88.3 55.8L95.4 51.7L95.4 61.4L88.3 65.5zM97.2 50.7L104.3 46.6L104.3 56.3L97.2 60.4zM106.0 45.6L113.1 41.5L113.1 51.2L106.0 55.3zM61.8 83.1L68.9 79.0L68.9 88.7L61.8 92.8zM70.6 78.0L77.8 73.9L77.8 83.6L70.6 87.7zM79.5 72.9L86.6 68.8L86.6 78.5L79.5 82.6zM88.3 67.8L95.4 63.7L95.4 73.4L88.3 77.5zM97.2 62.7L104.3 58.6L104.3 68.3L97.2 72.4zM106.0 57.6L113.1 53.5L113.1 63.2L106.0 67.3zM61.8 103.1L68.9 99.0L68.9 108.7L61.8 112.8zM70.6 98.0L77.8 93.9L77.8 103.6L70.6 107.7zM79.5 92.9L86.6 88.8L86.6 98.5L79.5 102.6zM88.3 87.8L95.4 83.7L95.4 93.4L88.3 97.5zM97.2 82.7L104.3 78.6L104.3 88.3L97.2 92.4zM106.0 77.6L113.1 73.5L113.1 83.2L106.0 87.3zM61.8 115.1L68.9 111.0L68.9 120.7L61.8 124.8zM70.6 110.0L77.8 105.9L77.8 115.6L70.6 119.7zM79.5 104.9L86.6 100.8L86.6 110.5L79.5 114.6zM88.3 99.8L95.4 95.7L95.4 105.4L88.3 109.5zM97.2 94.7L104.3 90.6L104.3 100.3L97.2 104.4zM106.0 89.6L113.1 85.5L113.1 95.2L106.0 99.3zM61.8 135.1L68.9 131.0L68.9 140.7L61.8 144.8zM70.6 130.0L77.8 125.9L77.8 135.6L70.6 139.7zM79.5 124.9L86.6 120.8L86.6 130.5L79.5 134.6zM88.3 119.8L95.4 115.7L95.4 125.4L88.3 129.5zM97.2 114.7L104.3 110.6L104.3 120.3L97.2 124.4zM106.0 109.6L113.1 105.5L113.1 115.2L106.0 119.3zM61.8 147.1L68.9 143.0L68.9 152.7L61.8 156.8zM70.6 142.0L77.8 137.9L77.8 147.6L70.6 151.7zM79.5 136.9L86.6 132.8L86.6 142.5L79.5 146.6zM88.3 131.8L95.4 127.7L95.4 137.4L88.3 141.5zM97.2 126.7L104.3 122.6L104.3 132.3L97.2 136.4zM106.0 121.6L113.1 117.5L113.1 127.2L106.0 131.3zM61.8 167.1L68.9 163.0L68.9 172.7L61.8 176.8zM70.6 162.0L77.8 157.9L77.8 167.6L70.6 171.7zM79.5 156.9L86.6 152.8L86.6 162.5L79.5 166.6zM88.3 151.8L95.4 147.7L95.4 157.4L88.3 161.5zM97.2 146.7L104.3 142.6L104.3 152.3L97.2 156.4zM106.0 141.6L113.1 137.5L113.1 147.2L106.0 151.3zM61.8 179.1L68.9 175.0L68.9 184.7L61.8 188.8zM70.6 174.0L77.8 169.9L77.8 179.6L70.6 183.7zM79.5 168.9L86.6 164.8L86.6 174.5L79.5 178.6zM88.3 163.8L95.4 159.7L95.4 169.4L88.3 173.5zM97.2 158.7L104.3 154.6L104.3 164.3L97.2 168.4zM106.0 153.6L113.1 149.5L113.1 159.2L106.0 163.3z"/>
</svg>
<svg class="i" style="left:978.1px;top:281.1px;width:222.8px;height:145.7px;overflow:hidden" viewBox="0 0 1522 995" preserveAspectRatio="none"><defs><filter id="b3" x="-5%" y="-5%" width="110%" height="110%"><feGaussianBlur stdDeviation="4.5"/></filter><filter id="nb3" x="0" y="0" width="100%" height="100%"><feTurbulence type="fractalNoise" baseFrequency="0.06" numOctaves="3" seed="2"/><feColorMatrix type="matrix" values="1.6 0 0 0 -.3 1.6 0 0 0 -.3 1.6 0 0 0 -.3 0 0 0 0 1"/></filter></defs><g filter="url(#b3)"><rect x="-40" y="-40" width="1602" height="1075" fill="#2a3550"/><rect x="-40" y="-40" width="255" height="940" fill="#6f788c"/><rect x="-40" y="-40" width="255" height="60" fill="#66769a"/><rect x="0" y="15" width="85" height="130" fill="#4a566c"/><rect x="110" y="15" width="65" height="130" fill="#23395c"/><rect x="0" y="195" width="85" height="125" fill="#5a5c64"/><rect x="110" y="195" width="65" height="125" fill="#2c3a56"/><rect x="0" y="370" width="85" height="130" fill="#161e36"/><rect x="110" y="370" width="65" height="130" fill="#18223c"/><rect x="0" y="545" width="85" height="125" fill="#7a5434"/><rect x="110" y="545" width="65" height="125" fill="#b98c5e"/><rect x="0" y="60" width="40" height="80" fill="#c8c0b0"/><rect x="45" y="260" width="40" height="60" fill="#d8d0c4"/><rect x="110" y="280" width="65" height="40" fill="#d0c8c0"/><rect x="0" y="20" width="85" height="40" fill="#2a3850"/><rect x="0" y="195" width="85" height="55" fill="#2a3448"/><rect x="0" y="690" width="215" height="30" fill="#a0a4b0"/><polygon points="0,715 180,715 150,790 0,790" fill="#3d6c9c"/><rect x="0" y="790" width="215" height="90" fill="#8a6040"/><rect x="0" y="800" width="180" height="40" fill="#c89868"/><polygon points="215,-40 415,-40 540,250 215,250" fill="#2f5684"/><polygon points="215,-40 300,-40 300,250 215,250" fill="#46668c"/><polygon points="470,110 505,130 545,250 500,250" fill="#4f93b4"/><rect x="270" y="20" width="22" height="50" fill="#27446e"/><rect x="320" y="60" width="22" height="50" fill="#27446e"/><rect x="370" y="100" width="22" height="50" fill="#27446e"/><rect x="270" y="140" width="22" height="50" fill="#27446e"/><rect x="320" y="180" width="22" height="50" fill="#27446e"/><rect x="370" y="150" width="22" height="50" fill="#27446e"/><rect x="440" y="170" width="22" height="50" fill="#27446e"/><polygon points="415,-40 628,-40 628,260 545,260" fill="#fcf7f1"/><rect x="215" y="250" width="430" height="400" fill="#0c1324"/><rect x="215" y="640" width="430" height="245" fill="#332c34"/><rect x="370" y="670" width="215" height="215" fill="#463c44"/><rect x="490" y="780" width="55" height="105" fill="#1f1c24"/><rect x="480" y="280" width="65" height="60" fill="#b9c9e4"/><rect x="485" y="370" width="55" height="50" fill="#c9d5ea"/><rect x="495" y="440" width="45" height="40" fill="#9fb0d0"/><rect x="600" y="360" width="45" height="160" fill="#8294b4"/><rect x="585" y="650" width="65" height="110" fill="#6a5a50"/><rect x="350" y="250" width="5" height="390" fill="#2a3448"/><rect x="420" y="250" width="5" height="390" fill="#2a3448"/><rect x="490" y="250" width="5" height="390" fill="#2a3448"/><rect x="215" y="470" width="430" height="6" fill="#2a3448"/><rect x="628" y="-40" width="277" height="355" fill="#163a66"/><rect x="760" y="-40" width="145" height="290" fill="#2766a6"/><rect x="760" y="45" width="145" height="32" fill="#16335c"/><rect x="760" y="100" width="145" height="32" fill="#16335c"/><rect x="760" y="150" width="145" height="32" fill="#16335c"/><rect x="640" y="125" width="75" height="30" fill="#c8a878"/><rect x="790" y="175" width="75" height="70" fill="#a9c4e4"/><rect x="800" y="-10" width="95" height="32" fill="#a8b8c8"/><rect x="755" y="250" width="90" height="80" fill="#cfdcec"/><rect x="900" y="-40" width="80" height="340" fill="#9fbde0"/><polygon points="955,130 990,100 990,300 955,300" fill="#6a86b0"/><rect x="900" y="250" width="80" height="635" fill="#1d1f2d"/><rect x="910" y="780" width="30" height="60" fill="#d8c8b8"/><polygon points="900,250 930,250 930,350 900,330" fill="#4a76b0"/><rect x="650" y="315" width="250" height="570" fill="#d9d7d6"/><rect x="660" y="330" width="235" height="170" fill="#e9e6e2"/><rect x="690" y="500" width="200" height="200" fill="#f0ece8"/><rect x="660" y="700" width="235" height="180" fill="#c6c2c0"/><rect x="700" y="760" width="190" height="110" fill="#e0dcd8"/><rect x="650" y="315" width="12" height="570" fill="#5a6070"/><rect x="780" y="330" width="6" height="550" fill="#a8a8ac"/><rect x="650" y="505" width="250" height="7" fill="#a0a0a4"/><rect x="650" y="690" width="250" height="10" fill="#8a8a90"/><rect x="650" y="735" width="250" height="7" fill="#9a9a9e"/><polygon points="700,520 730,520 760,700 730,700" fill="#b8b8bc"/><polygon points="880,520 850,520 820,700 850,700" fill="#b8b8bc"/><rect x="770" y="800" width="20" height="70" fill="#2a2830"/><rect x="975" y="-40" width="465" height="925" fill="#817e8c"/><rect x="975" y="-40" width="465" height="135" fill="#4b4038"/><rect x="1010" y="30" width="50" height="40" fill="#9a7848"/><rect x="1100" y="30" width="50" height="40" fill="#9a7848"/><rect x="1190" y="30" width="50" height="40" fill="#9a7848"/><rect x="1280" y="30" width="50" height="40" fill="#9a7848"/><rect x="1370" y="30" width="50" height="40" fill="#9a7848"/><rect x="975" y="95" width="465" height="25" fill="#6c6876"/><rect x="1012" y="142" width="91" height="106" fill="#6a6674"/><rect x="1020" y="150" width="75" height="90" fill="#f2a85a"/><rect x="1028" y="175" width="42" height="55" fill="#ffd8a0"/><rect x="1020" y="144" width="85" height="18" fill="#c02c3c"/><rect x="1012" y="332" width="91" height="106" fill="#6a6674"/><rect x="1020" y="340" width="75" height="90" fill="#f2a85a"/><rect x="1028" y="365" width="42" height="55" fill="#ffd8a0"/><rect x="1020" y="334" width="85" height="18" fill="#c02c3c"/><rect x="1152" y="142" width="91" height="106" fill="#6a6674"/><rect x="1160" y="150" width="75" height="90" fill="#f2a85a"/><rect x="1168" y="175" width="42" height="55" fill="#ffd8a0"/><rect x="1160" y="144" width="85" height="18" fill="#c02c3c"/><rect x="1152" y="332" width="91" height="106" fill="#6a6674"/><rect x="1160" y="340" width="75" height="90" fill="#f2a85a"/><rect x="1168" y="365" width="42" height="55" fill="#ffd8a0"/><rect x="1160" y="334" width="85" height="18" fill="#c02c3c"/><rect x="1292" y="142" width="91" height="106" fill="#6a6674"/><rect x="1300" y="150" width="75" height="90" fill="#f2a85a"/><rect x="1308" y="175" width="42" height="55" fill="#ffd8a0"/><rect x="1300" y="144" width="85" height="18" fill="#c02c3c"/><rect x="1292" y="332" width="91" height="106" fill="#6a6674"/><rect x="1300" y="340" width="75" height="90" fill="#f2a85a"/><rect x="1308" y="365" width="42" height="55" fill="#ffd8a0"/><rect x="1300" y="334" width="85" height="18" fill="#c02c3c"/><rect x="975" y="500" width="465" height="40" fill="#6c6a78"/><rect x="975" y="540" width="465" height="345" fill="#6a6468"/><rect x="1000" y="545" width="55" height="125" fill="#eae6e2"/><rect x="1090" y="545" width="210" height="125" fill="#eeeae6"/><rect x="1330" y="545" width="60" height="125" fill="#eae6e2"/><rect x="1150" y="545" width="10" height="125" fill="#8a8680"/><rect x="1230" y="545" width="10" height="125" fill="#8a8680"/><rect x="1085" y="680" width="225" height="40" fill="#2c2420"/><rect x="1090" y="705" width="215" height="40" fill="#8a6a40"/><rect x="1095" y="745" width="205" height="100" fill="#e2cdb8"/><rect x="1160" y="745" width="70" height="100" fill="#c8a890"/><rect x="1085" y="845" width="225" height="35" fill="#3a2c24"/><rect x="1000" y="700" width="60" height="80" fill="#d8b080"/><rect x="1000" y="780" width="55" height="100" fill="#3a3038"/><rect x="1330" y="700" width="60" height="90" fill="#e8c8a0"/><rect x="1330" y="790" width="55" height="80" fill="#d8c8b8"/><rect x="1435" y="-40" width="127" height="925" fill="#6a6470"/><rect x="1435" y="-40" width="15" height="925" fill="#5a5460"/><rect x="1445" y="-40" width="117" height="76" fill="#e6304e"/><rect x="1440" y="540" width="122" height="160" fill="#8e7c70"/><rect x="1440" y="790" width="122" height="95" fill="#3c3440"/><rect x="1450" y="800" width="70" height="50" fill="#c8a070"/><polygon points="520,250 615,190 622,270 565,322" fill="#d66a78"/><polygon points="585,165 620,150 625,200 590,215" fill="#3a68a8"/><polygon points="528,268 618,208 620,222 535,282" fill="#f4e8e8"/><polygon points="545,296 620,240 622,252 552,308" fill="#f4e8e8"/><rect x="-40" y="878" width="1602" height="52" fill="#5a6684"/><rect x="600" y="885" width="962" height="30" fill="#a89484"/><rect x="900" y="890" width="500" height="18" fill="#d0a880"/><rect x="-40" y="925" width="1602" height="110" fill="#17223c"/><rect x="250" y="935" width="1312" height="25" fill="#223054"/><rect x="280" y="955" width="130" height="13" fill="#6a7ca4"/><rect x="620" y="955" width="130" height="13" fill="#6a7ca4"/><rect x="900" y="955" width="130" height="13" fill="#6a7ca4"/><rect x="1180" y="955" width="130" height="13" fill="#6a7ca4"/><polygon points="-40,895 230,895 270,930 180,975 -40,980" fill="#c08a24"/><rect x="-40" y="930" width="220" height="30" fill="#e2a834"/><rect x="-40" y="975" width="240" height="60" fill="#2a2c38"/><rect x="0" y="850" width="230" height="30" fill="#b8a080"/></g><rect width="1522" height="995" filter="url(#nb3)" opacity="0.18" style="mix-blend-mode:soft-light"/></svg>
<svg class="i" style="left:1236.1px;top:280.1px;width:221.8px;height:147.8px;overflow:hidden" viewBox="0 0 1515 1010" preserveAspectRatio="none"><defs><filter id="b4" x="-5%" y="-5%" width="110%" height="110%"><feGaussianBlur stdDeviation="4.5"/></filter><filter id="nb4" x="0" y="0" width="100%" height="100%"><feTurbulence type="fractalNoise" baseFrequency="0.06" numOctaves="3" seed="2"/><feColorMatrix type="matrix" values="1.6 0 0 0 -.3 1.6 0 0 0 -.3 1.6 0 0 0 -.3 0 0 0 0 1"/></filter></defs><g filter="url(#b4)"><rect x="-40" y="-40" width="1595" height="1090" fill="#5c5856"/><rect x="-40" y="-40" width="1595" height="60" fill="#464c5c"/><rect x="-40" y="20" width="1595" height="80" fill="#8a8a90"/><rect x="-40" y="100" width="1595" height="90" fill="#5e5650"/><rect x="-40" y="20" width="120" height="85" fill="#9aa0a4"/><rect x="-40" y="105" width="120" height="85" fill="#4a4c50"/><rect x="80" y="20" width="125" height="85" fill="#6a6e78"/><rect x="80" y="105" width="125" height="85" fill="#3c3c40"/><rect x="205" y="20" width="125" height="85" fill="#a2a4a8"/><rect x="205" y="105" width="125" height="85" fill="#5a5a5c"/><rect x="330" y="20" width="125" height="85" fill="#8a8480"/><rect x="330" y="105" width="125" height="85" fill="#5c5450"/><rect x="455" y="20" width="125" height="85" fill="#6a5c52"/><rect x="455" y="105" width="125" height="85" fill="#6a5a4e"/><rect x="580" y="20" width="125" height="85" fill="#6c5e54"/><rect x="580" y="105" width="125" height="85" fill="#5c4c42"/><rect x="705" y="20" width="125" height="85" fill="#a8a6a4"/><rect x="705" y="105" width="125" height="85" fill="#6a5e56"/><rect x="830" y="20" width="125" height="85" fill="#8c8e96"/><rect x="830" y="105" width="125" height="85" fill="#54545a"/><rect x="955" y="20" width="120" height="85" fill="#a4a4a6"/><rect x="955" y="105" width="120" height="85" fill="#5a5858"/><rect x="1075" y="20" width="125" height="85" fill="#8e8e92"/><rect x="1075" y="105" width="125" height="85" fill="#4a4846"/><rect x="1200" y="20" width="125" height="85" fill="#b0b0b2"/><rect x="1200" y="105" width="125" height="85" fill="#5a5a5c"/><rect x="1325" y="20" width="125" height="85" fill="#b6b4b2"/><rect x="1325" y="105" width="125" height="85" fill="#8a8682"/><rect x="1450" y="20" width="105" height="85" fill="#a8b4c4"/><rect x="1450" y="105" width="105" height="85" fill="#7a8088"/><rect x="-40" y="185" width="1595" height="103" fill="#3a3e4c"/><rect x="-40" y="288" width="120" height="92" fill="#8a8a8e"/><rect x="-40" y="380" width="120" height="95" fill="#3a3634"/><rect x="80" y="288" width="125" height="92" fill="#8e9096"/><rect x="80" y="380" width="125" height="95" fill="#4a4644"/><rect x="205" y="288" width="125" height="92" fill="#a09c98"/><rect x="205" y="380" width="125" height="95" fill="#6a5e54"/><rect x="330" y="288" width="125" height="92" fill="#9a9aa0"/><rect x="330" y="380" width="125" height="95" fill="#5a5856"/><rect x="455" y="288" width="125" height="92" fill="#92949a"/><rect x="455" y="380" width="125" height="95" fill="#4a4848"/><rect x="580" y="288" width="125" height="92" fill="#a0a0a4"/><rect x="580" y="380" width="125" height="95" fill="#545458"/><rect x="705" y="288" width="125" height="92" fill="#9a9ca2"/><rect x="705" y="380" width="125" height="95" fill="#50545c"/><rect x="830" y="288" width="125" height="92" fill="#a2a4a8"/><rect x="830" y="380" width="125" height="95" fill="#5c6068"/><rect x="955" y="288" width="120" height="92" fill="#a4a4a6"/><rect x="955" y="380" width="120" height="95" fill="#5a5c60"/><rect x="1075" y="288" width="125" height="92" fill="#9a9ca0"/><rect x="1075" y="380" width="125" height="95" fill="#4e4e52"/><rect x="1200" y="288" width="125" height="92" fill="#8e9096"/><rect x="1200" y="380" width="125" height="95" fill="#5a5c62"/><rect x="1325" y="288" width="125" height="92" fill="#7e8088"/><rect x="1325" y="380" width="125" height="95" fill="#5a5650"/><rect x="1450" y="288" width="105" height="92" fill="#6a7078"/><rect x="1450" y="380" width="105" height="95" fill="#4a4e50"/><rect x="71" y="-40" width="18" height="518" fill="#c6c8ce"/><rect x="196" y="-40" width="18" height="518" fill="#c6c8ce"/><rect x="321" y="-40" width="18" height="518" fill="#c6c8ce"/><rect x="446" y="-40" width="18" height="518" fill="#c6c8ce"/><rect x="571" y="-40" width="18" height="518" fill="#c6c8ce"/><rect x="696" y="-40" width="18" height="518" fill="#c6c8ce"/><rect x="821" y="-40" width="18" height="518" fill="#c6c8ce"/><rect x="946" y="-40" width="18" height="518" fill="#c6c8ce"/><rect x="1066" y="-40" width="18" height="518" fill="#c6c8ce"/><rect x="1191" y="-40" width="18" height="518" fill="#c6c8ce"/><rect x="1316" y="-40" width="18" height="518" fill="#c6c8ce"/><rect x="1441" y="-40" width="18" height="518" fill="#c6c8ce"/><rect x="-40" y="472" width="1595" height="96" fill="#433e3a"/><rect x="300" y="480" width="400" height="80" fill="#4c4642"/><text x="706" y="545" font-family="Liberation Sans, sans-serif" font-size="62" fill="#a69e96" text-anchor="middle" letter-spacing="2">641</text><rect x="-40" y="565" width="1595" height="37" fill="#aaa4a0"/><rect x="300" y="565" width="700" height="35" fill="#beb8b4"/><rect x="-40" y="600" width="255" height="350" fill="#7c7876"/><rect x="80" y="610" width="120" height="130" fill="#b4b0ac"/><rect x="85" y="625" width="110" height="12" fill="#8a8682"/><rect x="85" y="655" width="110" height="12" fill="#8a8682"/><rect x="85" y="685" width="110" height="12" fill="#8a8682"/><rect x="85" y="715" width="110" height="12" fill="#8a8682"/><rect x="-40" y="600" width="115" height="140" fill="#5a5654"/><rect x="30" y="770" width="145" height="162" fill="#8fc3c4"/><rect x="98" y="770" width="10" height="162" fill="#6a8c90"/><rect x="8" y="810" width="47" height="175" fill="#1b2740"/><rect x="215" y="600" width="985" height="350" fill="#3a302a"/><polygon points="290,608 1125,608 1010,665 410,665" fill="#b9b1ad"/><rect x="420" y="670" width="580" height="50" fill="#54463c"/><rect x="450" y="690" width="700" height="100" fill="#5e4a3a"/><rect x="260" y="640" width="160" height="150" fill="#3a302c"/><rect x="1020" y="660" width="180" height="140" fill="#3c2c24"/><rect x="780" y="740" width="220" height="50" fill="#8c7258"/><rect x="260" y="790" width="935" height="150" fill="#52463e"/><rect x="260" y="786" width="935" height="12" fill="#a69888"/><rect x="260" y="850" width="935" height="8" fill="#867a70"/><rect x="260" y="905" width="935" height="8" fill="#80746c"/><rect x="300" y="790" width="14" height="150" fill="#3a302c"/><rect x="470" y="790" width="14" height="150" fill="#3a302c"/><rect x="520" y="790" width="14" height="150" fill="#3a302c"/><rect x="580" y="790" width="14" height="150" fill="#3a302c"/><rect x="660" y="790" width="14" height="150" fill="#3a302c"/><rect x="830" y="790" width="14" height="150" fill="#3a302c"/><rect x="930" y="790" width="14" height="150" fill="#3a302c"/><rect x="1000" y="790" width="14" height="150" fill="#3a302c"/><rect x="1090" y="790" width="14" height="150" fill="#3a302c"/><rect x="340" y="870" width="130" height="70" fill="#3a3430"/><rect x="1040" y="820" width="150" height="120" fill="#3e3632"/><rect x="675" y="600" width="62" height="350" fill="#cbb8ac"/><rect x="210" y="600" width="52" height="350" fill="#3a3634"/><rect x="1200" y="600" width="42" height="362" fill="#b2a69e"/><rect x="1240" y="600" width="315" height="362" fill="#2c3148"/><rect x="1240" y="600" width="315" height="65" fill="#8a8684"/><rect x="1240" y="665" width="315" height="35" fill="#5a5a62"/><rect x="1300" y="715" width="160" height="7" fill="#8a8680"/><rect x="1300" y="715" width="10" height="240" fill="#8a8680"/><rect x="1450" y="715" width="10" height="240" fill="#8a8680"/><rect x="1310" y="722" width="140" height="233" fill="#2a2a38"/><rect x="1365" y="780" width="10" height="175" fill="#8a8680"/><rect x="1470" y="720" width="85" height="240" fill="#343a52"/><rect x="-40" y="945" width="1595" height="105" fill="#8d9bb3"/><rect x="-40" y="945" width="1595" height="15" fill="#6a7488"/><rect x="1240" y="955" width="315" height="20" fill="#3a3c48"/><polygon points="1450,400 1515,380 1560,390 1560,640 1420,650 1330,640 1370,590 1450,530" fill="#3f6a36" opacity=".85"/><polygon points="1270,670 1340,630 1400,650 1310,690" fill="#44703c" opacity=".7"/><polygon points="28,20 40,16 222,520 208,526" fill="#b8b4b4"/><polygon points="40,50 95,130 205,385 192,425 95,330 65,200" fill="#c23a48"/><polygon points="38,55 82,120 88,180 48,150" fill="#34589a"/><polygon points="76,195.8 88,191.8 183.2,391.6 171.2,395.6" fill="#f0e4e4"/><polygon points="98,189.2 110,185.2 200.8,378.4 188.8,382.4" fill="#f0e4e4"/><polygon points="1392,8 1404,12 1212,540 1200,534" fill="#c0bcbc"/><polygon points="1400,45 1470,110 1560,160 1560,385 1440,300 1338,250 1372,120" fill="#cf3c4a"/><polygon points="1400,45 1470,110 1440,190 1372,130" fill="#2c4c9c"/><polygon points="1445,150 1560,205 1560,225 1440,170" fill="#f4e8e8"/><polygon points="1423,192 1560,247 1560,267 1418,212" fill="#f4e8e8"/><polygon points="1401,234 1560,289 1560,309 1396,254" fill="#f4e8e8"/><polygon points="1379,276 1560,331 1560,351 1374,296" fill="#f4e8e8"/><rect x="1180" y="520" width="60" height="40" fill="#c8c8cc" rx="20"/><rect x="185" y="510" width="50" height="40" fill="#c8c8cc" rx="20"/></g><rect width="1515" height="1010" filter="url(#nb4)" opacity="0.18" style="mix-blend-mode:soft-light"/></svg>
<span class="t" style="left:463.20px;top:478.00px;font-size:15px;color:#2f3538;font-weight:400;-webkit-text-stroke:0.39px currentColor;letter-spacing:0.282px;">district-night.png</span>
<span class="t" style="left:720.10px;top:478.00px;font-size:15px;color:#2f3538;font-weight:400;-webkit-text-stroke:0.39px currentColor;letter-spacing:0.181px;">building-icon.svg</span>
<span class="t" style="left:978.30px;top:478.00px;font-size:15px;color:#2f3538;font-weight:400;-webkit-text-stroke:0.39px currentColor;letter-spacing:0.039px;">645-5th-Ave-New-York.png</span>
<span class="t" style="left:1236.00px;top:478.00px;font-size:15px;color:#2f3538;font-weight:400;-webkit-text-stroke:0.39px currentColor;">641-E-54th-St-New-York.png</span>
<span class="t" style="left:463.70px;top:525.00px;font-size:12.5px;color:#9b9d9e;-webkit-text-stroke:0.14px currentColor;letter-spacing:-0.100px;">1920x1282</span>
<span class="t" style="left:546.60px;top:525.00px;font-size:12.5px;color:#9b9d9e;-webkit-text-stroke:0.14px currentColor;letter-spacing:-0.260px;">3.1 MB</span>
<span class="t" style="left:720.10px;top:525.00px;font-size:12.5px;color:#9b9d9e;-webkit-text-stroke:0.14px currentColor;letter-spacing:-0.250px;">0x0</span>
<span class="t" style="left:761.70px;top:525.00px;font-size:12.5px;color:#9b9d9e;-webkit-text-stroke:0.14px currentColor;letter-spacing:-0.367px;">29.7 KB</span>
<span class="t" style="left:978.30px;top:525.00px;font-size:12.5px;color:#9b9d9e;-webkit-text-stroke:0.14px currentColor;letter-spacing:-0.125px;">1600x1051</span>
<span class="t" style="left:1061.40px;top:525.00px;font-size:12.5px;color:#9b9d9e;-webkit-text-stroke:0.14px currentColor;letter-spacing:-0.143px;">681.9 KB</span>
<span class="t" style="left:1236.00px;top:525.00px;font-size:12.5px;color:#9b9d9e;-webkit-text-stroke:0.14px currentColor;letter-spacing:-0.075px;">1500x1000</span>
<span class="t" style="left:1319.10px;top:525.00px;font-size:12.5px;color:#9b9d9e;-webkit-text-stroke:0.14px currentColor;letter-spacing:-0.214px;">697.1 KB</span>
<div class="a vd" style="left:535.1px"></div>
<div class="a vd" style="left:751.2px"></div>
<div class="a vd" style="left:1050.2px"></div>
<div class="a vd" style="left:1308.0px"></div>
</section>
<aside aria-label="Step 4">
<svg class="i" style="left:1470px;top:170px;width:80px;height:22px" viewBox="0 0 80 22"><circle cx="14" cy="10.6" r="5.2" fill="#fdc432"/><g fill="#fdc432"><rect x="14" y="9.1" width="14" height="3"/><rect x="33" y="9.1" width="20.8" height="3"/><rect x="59" y="9.1" width="9" height="3"/></g></svg>
<div class="a" style="left:1537px;top:162.3px;width:278px;height:41.5px;box-sizing:border-box;border:3.2px solid #fdc432;border-radius:9px;background:#fef0de;box-shadow:0 0 2px rgba(253,196,50,.35)"></div>
<div class="a" style="left:1558px;top:130.4px;width:30.2px;height:35px;box-sizing:border-box;border:3.2px solid #fdc432;border-radius:9px;background:#fff;box-shadow:0 0 2px rgba(253,196,50,.35)"></div>
<span class="t" style="left:1565.30px;top:137.00px;font-size:25.5px;color:#000;">4</span>
<span class="t" style="left:1545.00px;top:170.00px;font-size:28px;color:#000;letter-spacing:-0.037px;">Click "Upload image"</span>
</aside>
</body></html>
